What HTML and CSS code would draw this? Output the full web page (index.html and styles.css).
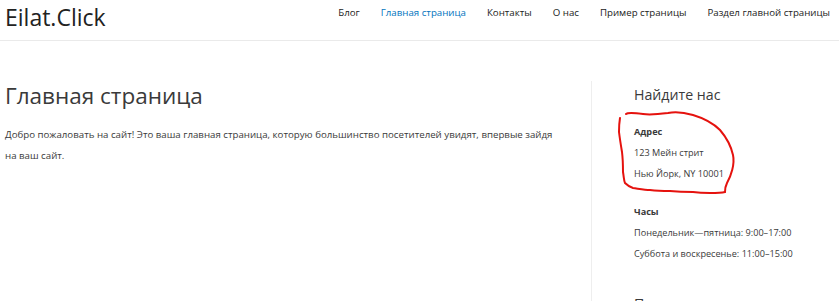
FILE: index.html
```html
<!DOCTYPE html>
<html lang="ru">
  <head>
    <meta charset="UTF-8" />
    <meta name="viewport" content="width=device-width, initial-scale=1.0" />
    <title>Eilat.Click</title>
    <link rel="stylesheet" href="styles.css">
  </head>
  <body>
    <header class="site-header">
      <div class="site-title">Eilat.Click</div>
      <nav class="main-nav">
        <a href="#">Блог</a>
        <a href="#" class="current">Главная страница</a>
        <a href="#">Контакты</a>
        <a href="#">О нас</a>
        <a href="#">Пример страницы</a>
        <a href="#">Раздел главной страницы</a>
      </nav>
    </header>

    <div class="site-content">
      <main class="content">
        <h1 class="entry-title">Главная страница</h1>
        <p>Добро пожаловать на сайт! Это ваша главная страница, которую большинство посетителей увидят, впервые зайдя на ваш сайт.</p>
      </main>

      <aside class="sidebar">
        <h2 class="widget-title">Найдите нас</h2>
        <p><strong>Адрес</strong><br>123 Мейн стрит<br>Нью Йорк, NY 10001</p>
        <p><strong>Часы</strong><br>Понедельник—пятница: 9:00–17:00<br>Суббота и воскресенье: 11:00–15:00</p>
        <h2 class="widget-title">Поиск</h2>
      </aside>
    </div>

    <!-- hand-drawn marker round the address -->
    <svg class="scribble" width="839" height="301" viewBox="0 0 839 301">
      <path d="M626 114 C628 112 636 113 643 114 C650 115 660 114 668 113 C678 111 686 113 693 115 C703 118 713 123 720 130 C726 137 731 146 733 155 C735 164 731 176 727 183 C725 187 725 190 725 192" />
      <path d="M620 118 C619 124 619 128 619 132 C620 140 621 146 622 152 C623 160 623 166 623 172 C624 178 624 181 625 183 C628 186 630 187 633 188 C640 189 645 190 650 190 C658 191 664 191 670 191 C680 192 686 192 693 192 C700 193 705 193 710 193 C716 193 721 193 725 192" />
    </svg>
  </body>
</html>
```

FILE: styles.css
```css
body {
  margin: 0;
  padding: 0;
  background: #fff;
  color: #3a3a3a;
  font-family: "Open Sans", "Noto Sans", sans-serif;
  line-height: 21px;
  overflow: hidden;
}

a {
  text-decoration: none;
}

.site-header {
  display: flex;
  align-items: flex-start;
  justify-content: space-between;
  height: 40px;
  border-bottom: 1px solid #eaeaea;
  padding: 0 9px 0 5px;
}

.site-title {
  font-size: 23px;
  line-height: 34px;
  color: #222;
}

.main-nav {
  display: flex;
  gap: 21px;
  padding-top: 4px;
}

.main-nav a {
  color: #222;
  font-size: 9.7px;
  line-height: 18px;
}

.main-nav a.current {
  color: #0274be;
}

.site-content {
  display: flex;
  padding-top: 40px;
}

.content {
  flex: 0 0 591px;
  box-sizing: border-box;
  padding: 0 31px 0 5px;
  font-size: 9.7px;
}

.entry-title {
  margin: 0;
  font-size: 22.5px;
  line-height: 30px;
  font-weight: 400;
}

.content p {
  margin: 13px 0 0;
}

.sidebar {
  flex: 1;
  border-left: 1px solid #eee;
  padding-left: 42px;
  height: 260px;
  font-size: 9.15px;
}

.widget-title {
  margin: 0;
  font-size: 14.2px;
  line-height: 28px;
  font-weight: 400;
}

.sidebar p {
  margin: 12px 0 0;
}

.sidebar p + p {
  margin-top: 17px;
}

.sidebar p + .widget-title {
  margin-top: 26px;
}

.sidebar strong {
  font-weight: 700;
}

.scribble {
  position: absolute;
  top: 0;
  left: 0;
  pointer-events: none;
  fill: none;
  stroke: #e5120e;
  stroke-width: 2;
  stroke-linecap: round;
  stroke-linejoin: round;
}
```
